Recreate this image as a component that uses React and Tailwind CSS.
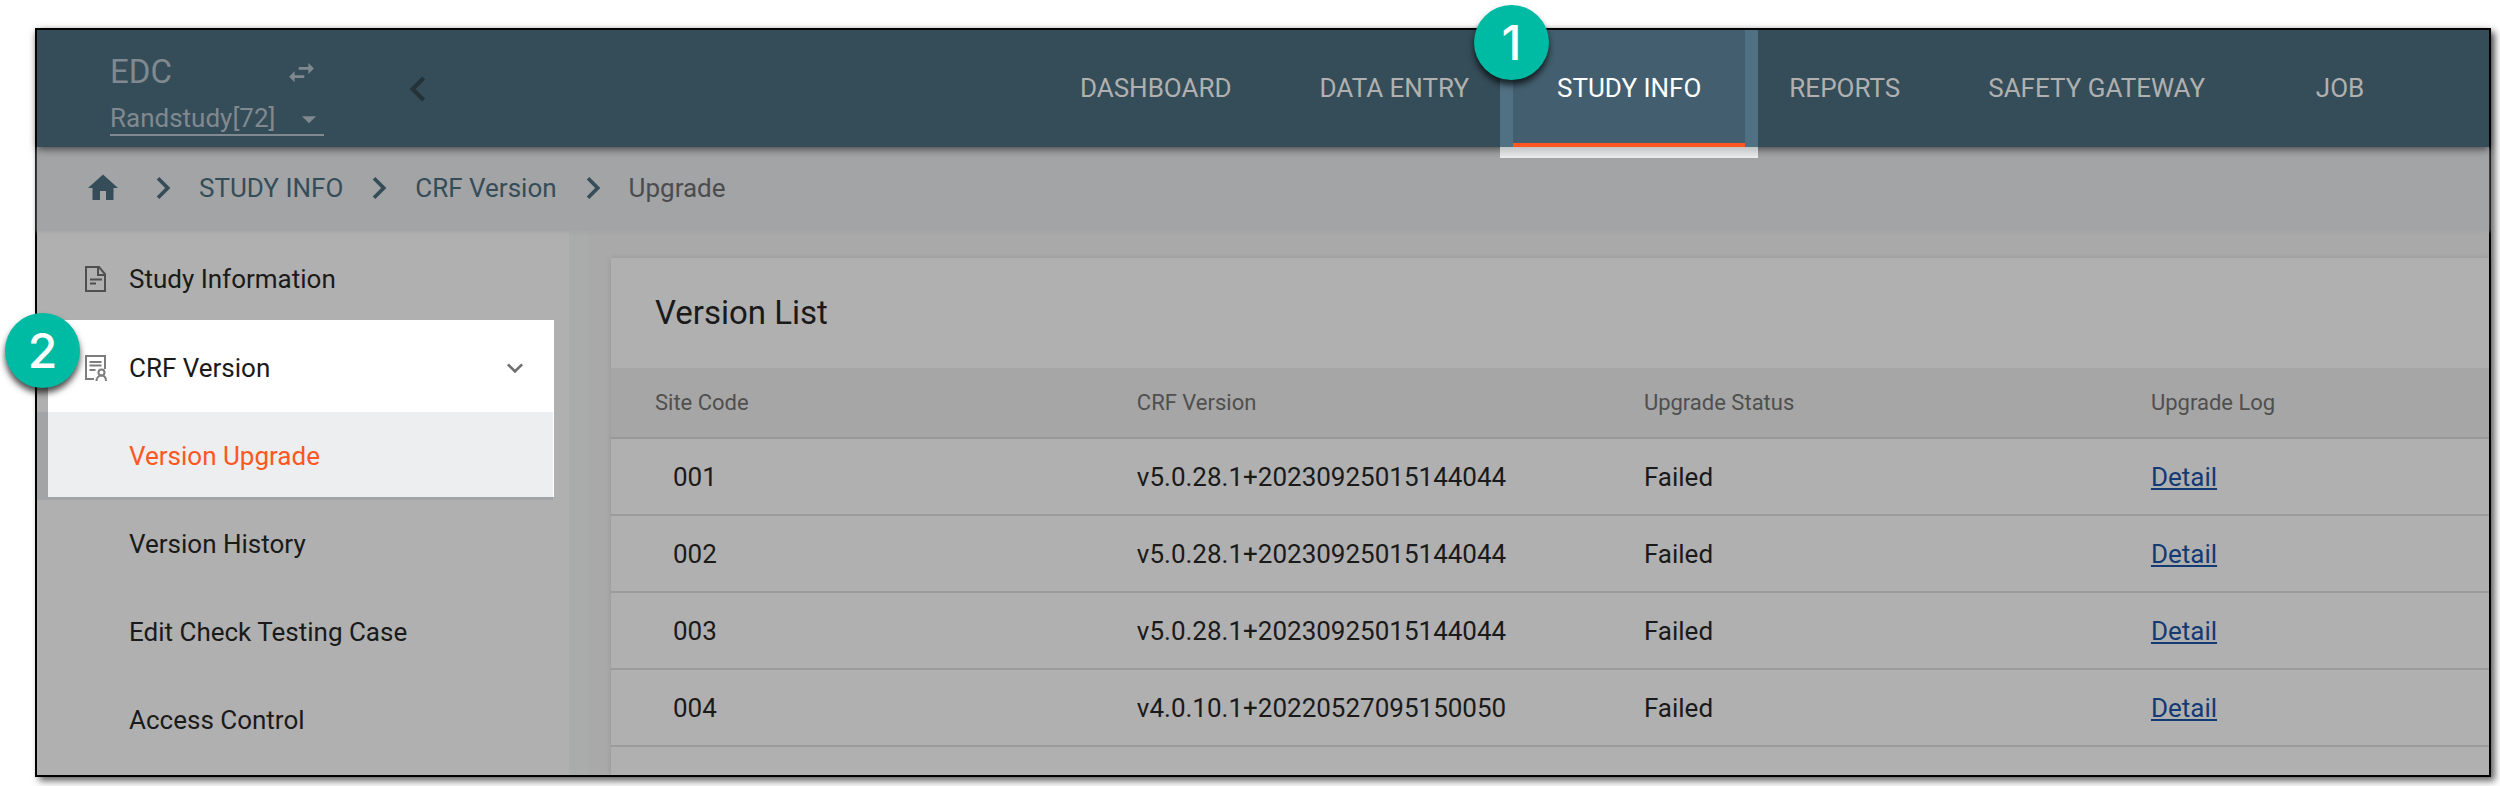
import React from 'react';
import { MdHome, MdChevronRight, MdChevronLeft, MdSwapHoriz, MdArrowDropDown, MdExpandMore } from 'react-icons/md';

const tabs = ['DASHBOARD', 'DATA ENTRY', 'STUDY INFO', 'REPORTS', 'SAFETY GATEWAY', 'JOB'];

const rows = [
  { site: '001', version: 'v5.0.28.1+20230925015144044', status: 'Failed' },
  { site: '002', version: 'v5.0.28.1+20230925015144044', status: 'Failed' },
  { site: '003', version: 'v5.0.28.1+20230925015144044', status: 'Failed' },
  { site: '004', version: 'v4.0.10.1+20220527095150050', status: 'Failed' },
];

const DocumentIcon = () => (
  <svg width="22" height="26" viewBox="0 0 22 26" fill="none" stroke="#4f4f4f" strokeWidth="2" aria-hidden="true">
    <path d="M1 1h13l6 7v17H1z" />
    <path d="M13 1v8h7" />
    <path d="M5 13.500h12M5 17.500h6" />
  </svg>
);

const CertificateIcon = () => (
  <svg width="22" height="26" viewBox="0 0 22 26" fill="none" stroke="#7d7d7d" strokeWidth="2" aria-hidden="true">
    <path d="M20 14V1H1v23h8" />
    <path d="M4.500 7h12M4.500 10.500h12M4.500 15h6" />
    <circle cx="16.500" cy="17.500" r="3" />
    <path d="M11.500 26c0-3 2-5.500 5-5.500s4.500 2.500 4.500 5.500" />
  </svg>
);

const Step = ({ children, className }) => (
  <span className={`absolute z-30 flex size-[75px] items-center justify-center rounded-full bg-[#00bba3] font-[Inter,sans-serif] text-5xl font-medium text-white shadow-[0_5px_6px_rgba(0,0,0,0.7)] ${className}`}>
    {children}
  </span>
);

const App = () => {
  return (
    <div className="flex h-screen bg-white pt-7 pr-[9px] pb-[9px] pl-[35px] font-[Roboto,sans-serif] text-[26px] leading-8 text-[#1a1a1a]">
      <div className="flex min-w-0 flex-1 flex-col border-2 border-black bg-[#a8a8a8] shadow-[4px_4px_7px_rgba(0,0,0,0.6)]">
        {/* Top bar */}
        <header className="relative z-20 flex h-[117px] shrink-0 bg-[#354d59] text-[#b0b0b0] shadow-[0_2px_8px_rgba(0,0,0,0.6)]">
          <div className="ml-[73px] flex w-[214px] flex-col pt-[22px] text-[#80898f]">
            <div className="flex items-center justify-between pr-1.5">
              <span className="text-[33px] leading-10">EDC</span>
              <button type="button" aria-label="Switch application">
                <MdSwapHoriz size={33} />
              </button>
            </div>
            <div className="relative mt-2.5 border-b-2 border-[#80898f]">
              <select aria-label="Study" className="block w-full appearance-none bg-transparent leading-8 outline-none">
                <option>Randstudy[72]</option>
              </select>
              <MdArrowDropDown size={34} className="pointer-events-none absolute top-0 -right-0.5" />
            </div>
          </div>
          <button type="button" aria-label="Collapse menu" className="ml-[69px] self-center text-[#253238]">
            <MdChevronLeft size={50} />
          </button>
          <nav className="ml-auto flex pr-[58px]">
            {tabs.map((tab) => (
              <a
                key={tab}
                href="#"
                className={`relative flex min-w-[182px] items-center justify-center px-11 pb-0.5 ${tab === 'STUDY INFO' ? 'text-white' : ''}`}
              >
                {tab === 'STUDY INFO' && (
                  <>
                    <span className="absolute -inset-x-[13px] top-0 -bottom-[11px] bg-linear-to-b from-[#bcbdbf] from-90% to-[#ecedef]" />
                    <span className="absolute -inset-x-[13px] inset-y-0 bg-[#507083]" />
                    <span className="absolute inset-0 border-b-4 border-[#fe5722] bg-[#435f6f]" />
                    <Step className="-top-[25px] -left-[39px]">1</Step>
                  </>
                )}
                <span className="relative">{tab}</span>
              </a>
            ))}
          </nav>
        </header>

        {/* Breadcrumb */}
        <nav aria-label="Breadcrumb" className="relative z-10 flex h-[84px] shrink-0 items-center bg-[#a3a4a6] pb-0.5 pl-12 text-[#354d59] shadow-[0_1px_4px_rgba(163,164,166,0.9)]">
          <a href="#" aria-label="Home">
            <MdHome size={36} />
          </a>
          <MdChevronRight size={44} className="mr-3.5 ml-5" />
          <a href="#">STUDY INFO</a>
          <MdChevronRight size={44} className="mx-3.5" />
          <a href="#">CRF Version</a>
          <MdChevronRight size={44} className="mx-3.5" />
          <span className="text-[#4b4c4e]">Upgrade</span>
        </nav>

        <div className="flex min-h-0 flex-1">
          {/* Side menu */}
          <aside className="w-[551px] shrink-0 border-r-[19px] border-[#aaacab] bg-[#b0b0b0] pt-1">
            <ul>
              <li>
                <a href="#" className="flex h-[88px] items-center gap-[22px] pl-12">
                  <DocumentIcon />
                  Study Information
                </a>
              </li>
              <li className="relative">
                <div className="absolute -top-[3px] left-[11px] h-[177px] w-[506px] bg-white" />
                <button type="button" className="relative flex h-[89px] w-full items-center gap-[22px] pr-3 pl-12">
                  <CertificateIcon />
                  CRF Version
                  <MdExpandMore size={32} className="mr-[26px] ml-auto text-[#6f6f6f]" />
                </button>
                <Step className="-top-[10px] -left-[32px]">2</Step>
              </li>
              <li className="mr-4 bg-[#a3a4a6] pb-[3px] pl-[11px]">
                <a href="#" className="relative flex h-[85px] items-center bg-[#edeef0] pt-0.5 pl-[81px] text-[#fe5722]">
                  Version Upgrade
                </a>
              </li>
              <li>
                <a href="#" className="flex h-[88px] items-center pl-[92px]">Version History</a>
              </li>
              <li>
                <a href="#" className="flex h-[88px] items-center pl-[92px]">Edit Check Testing Case</a>
              </li>
              <li>
                <a href="#" className="flex h-[88px] items-center pl-[92px]">Access Control</a>
              </li>
            </ul>
          </aside>

          {/* Version table */}
          <main className="flex min-w-0 flex-1 flex-col bg-[#a9a9a9] pt-[27px] pl-[23px]">
            <section className="min-h-0 flex-1 overflow-hidden bg-[#b0b0b0] shadow-[0_0_5px_rgba(0,0,0,0.12)]">
              <h1 className="flex h-[110px] items-center pl-11 text-[33px] leading-10">Version List</h1>
              <table className="w-full table-fixed border-collapse text-left">
                <colgroup>
                  <col className="w-[28%]" />
                  <col className="w-[27%]" />
                  <col className="w-[27%]" />
                  <col />
                </colgroup>
                <thead>
                  <tr className="h-[70px] border-b-2 border-[#989898] bg-[#a6a6a6] text-[22px] text-[#4f4f4f]">
                    <th className="pl-11 font-normal">Site Code</th>
                    <th className="font-normal">CRF Version</th>
                    <th className="font-normal">Upgrade Status</th>
                    <th className="font-normal">Upgrade Log</th>
                  </tr>
                </thead>
                <tbody>
                  {rows.map((row) => (
                    <tr key={row.site} className="h-[77px] border-b-2 border-[#9b9b9b]">
                      <td className="pl-[62px]">{row.site}</td>
                      <td>{row.version}</td>
                      <td>{row.status}</td>
                      <td>
                        <a href="#" className="text-[#143a74] underline">Detail</a>
                      </td>
                    </tr>
                  ))}
                </tbody>
              </table>
            </section>
          </main>
        </div>
      </div>
    </div>
  );
};

export default App;
